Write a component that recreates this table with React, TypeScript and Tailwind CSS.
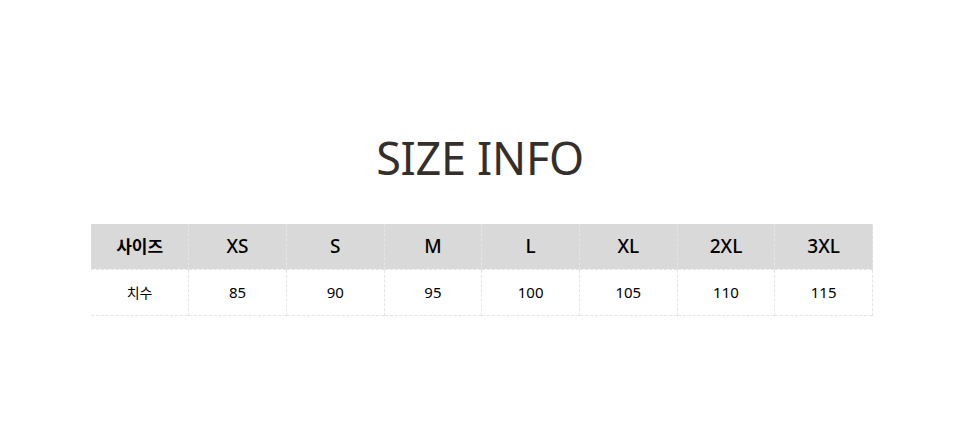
const sizes = ['XS', 'S', 'M', 'L', 'XL', '2XL', '3XL']
const values = ['85', '90', '95', '100', '105', '110', '115']

export default function App() {
  return (
    <div className="w-[960px] h-[448px] bg-white font-['Noto_Sans','Noto_Sans_CJK_KR',sans-serif]">
      <div className="pt-[127px] text-center">
        <h1 className="text-[45px] leading-[62px] text-[#352f2c] tracking-[-0.3px]">SIZE INFO</h1>
      </div>
      <table className="mt-[35px] ml-[91px] w-[782px] table-fixed border-collapse text-black">
        <thead>
          <tr className="h-[45px] bg-[#d9d9d9]">
            <th className="border-r border-dashed border-[#e4e4e4] text-[17px] font-bold">사이즈</th>
            {sizes.map((s) => (
              <th key={s} className="text-[19px] font-medium border-r border-dashed border-[#e4e4e4]">
                {s}
              </th>
            ))}
          </tr>
        </thead>
        <tbody>
          <tr className="h-[46px] border-t border-b border-dashed border-[#e4e4e4]">
            <td className="text-center text-[14px] font-normal border-r border-dashed border-[#e4e4e4]">치수</td>
            {values.map((v) => (
              <td key={v} className="text-center text-[15px] font-normal border-r border-dashed border-[#e4e4e4]">
                {v}
              </td>
            ))}
          </tr>
        </tbody>
      </table>
    </div>
  )
}
